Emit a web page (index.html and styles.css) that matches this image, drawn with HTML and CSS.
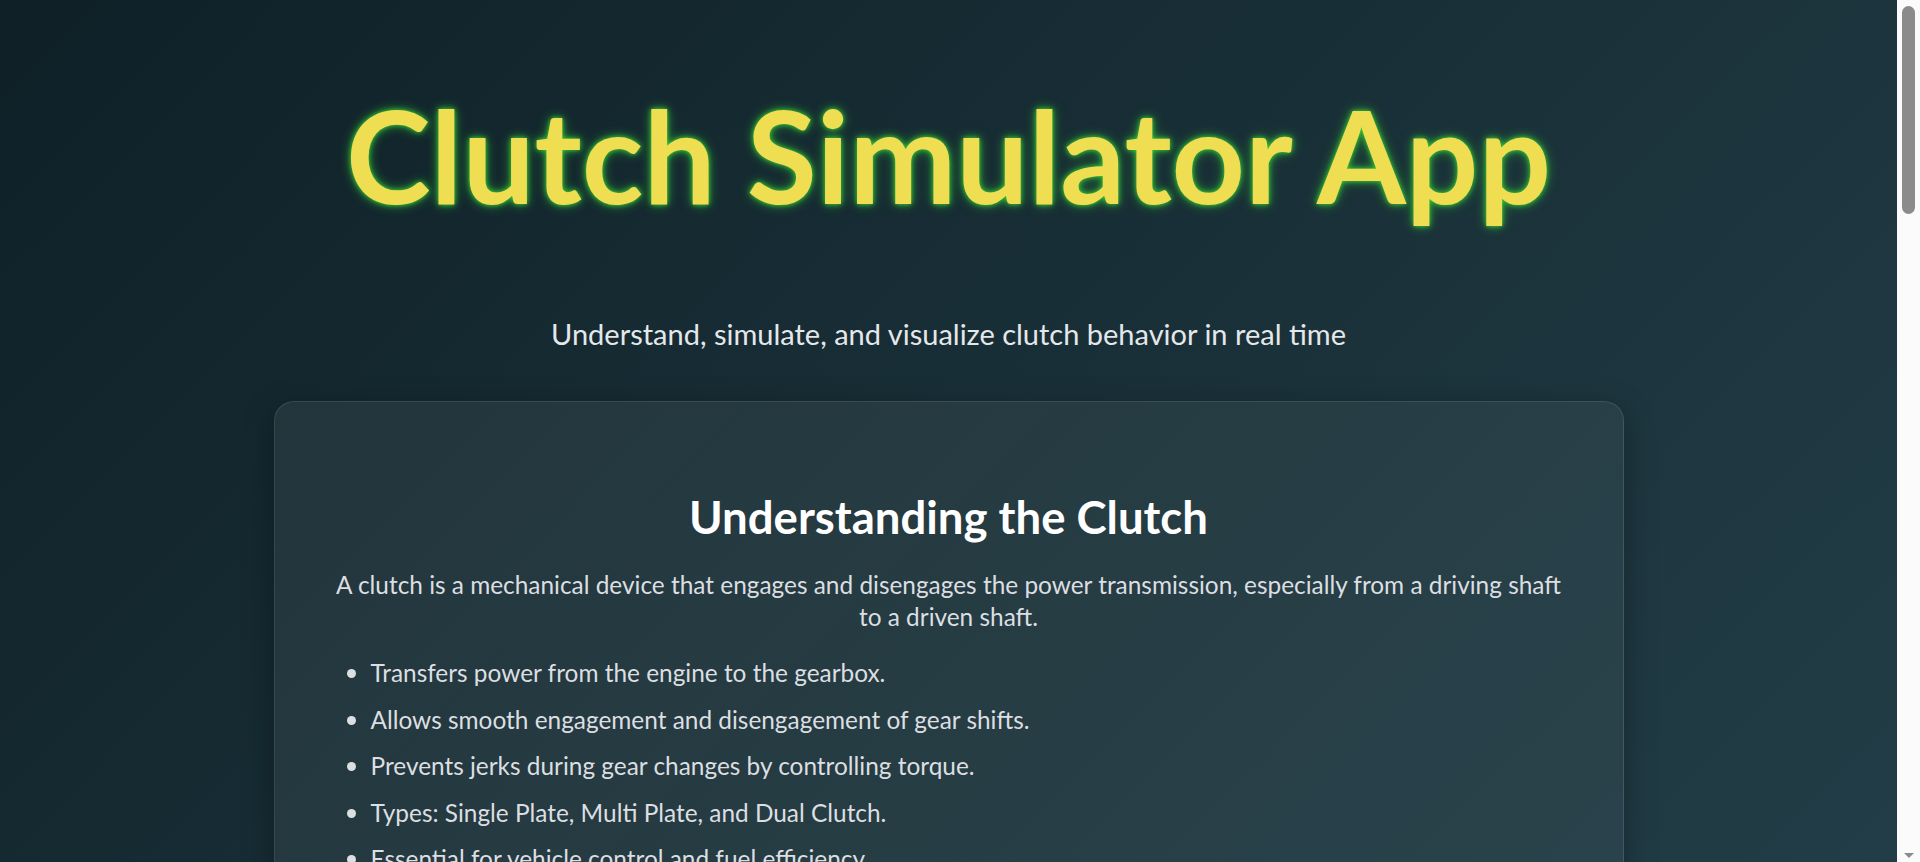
FILE: index.html
```html
<!DOCTYPE html>
<html lang="en">
<head>
<meta charset="utf-8">
<title>Clutch Simulator App</title>
<link rel="stylesheet" href="styles.css">
</head>
<body>
<div class="page">
<div class="page-inner">
<header class="hero">
  <h1 class="title">Clutch Simulator App</h1>
  <p class="subtitle">Understand, simulate, and visualize clutch behavior in real time</p>
</header>

<main class="main">
  <section class="card">
    <h2 class="card-title">Understanding the Clutch</h2>
    <p class="card-text">A clutch is a mechanical device that engages and disengages the power transmission, especially from a driving shaft to a driven shaft.</p>
    <ul class="card-list">
      <li>Transfers power from the engine to the gearbox.</li>
      <li>Allows smooth engagement and disengagement of gear shifts.</li>
      <li>Prevents jerks during gear changes by controlling torque.</li>
      <li>Types: Single Plate, Multi Plate, and Dual Clutch.</li>
      <li>Essential for vehicle control and fuel efficiency.</li>
    </ul>
  </section>

  <section class="card">
    <h2 class="card-title">Clutch Simulator</h2>
    <div class="controls">
      <label class="control">Clutch Pedal Position
        <input type="range" min="0" max="100" value="40">
      </label>
      <label class="control">Engine RPM
        <input type="range" min="800" max="7000" value="2500">
      </label>
      <label class="control">Gear
        <select><option>Neutral</option><option>1st</option><option>2nd</option></select>
      </label>
    </div>
    <div class="visual">
      <div class="disc disc-engine"></div>
      <div class="disc disc-gear"></div>
    </div>
    <div class="stats">
      <div class="stat"><span class="stat-label">Engagement</span><span class="stat-value">60%</span></div>
      <div class="stat"><span class="stat-label">Engine RPM</span><span class="stat-value">2500</span></div>
      <div class="stat"><span class="stat-label">Wheel RPM</span><span class="stat-value">1500</span></div>
      <div class="stat"><span class="stat-label">Torque</span><span class="stat-value">180 Nm</span></div>
    </div>
  </section>

  <section class="card">
    <h2 class="card-title">Types of Clutches</h2>
    <div class="types">
      <div class="type"><h3>Single Plate</h3><p>Common in cars; one friction disc between flywheel and pressure plate.</p></div>
      <div class="type"><h3>Multi Plate</h3><p>Several discs for higher torque in compact space; used in motorcycles.</p></div>
      <div class="type"><h3>Dual Clutch</h3><p>Two clutches for odd and even gears, enabling lightning-fast shifts.</p></div>
    </div>
  </section>

  <section class="card">
    <h2 class="card-title">Clutch Care Tips</h2>
    <ul class="card-list">
      <li>Avoid riding the clutch pedal while driving.</li>
      <li>Use the handbrake on slopes instead of slipping the clutch.</li>
      <li>Shift to neutral when stopped for long periods.</li>
      <li>Release the pedal smoothly to reduce wear.</li>
      <li>Have the clutch inspected at regular service intervals.</li>
    </ul>
  </section>
</main>

<footer class="footer">© 2024 Clutch Simulator App</footer>
</div>
</div>
<div class="scrollbar" aria-hidden="true">
  <div class="scrollbar-thumb"></div>
  <div class="scrollbar-arrow"></div>
</div>
</body>
</html>
```
FILE: styles.css
```css
html,
body {
  height: 100%;
  margin: 0;
  overflow: hidden;
  background: #0f2027;
}
body {
  display: flex;
  font-family: "Lato", "Noto Sans", sans-serif;
  color: #dcdfe1;
}

.page {
  flex: 1;
  min-width: 0;
  height: 100vh;
  overflow-y: auto;
  scrollbar-width: none;
}
.page-inner {
  background: linear-gradient(135deg, #0f2027 0%, #203a43 50%, #2c5364 100%);
}

/* window scrollbar rail, as in the captured browser */
.scrollbar {
  box-sizing: border-box;
  width: 23px;
  height: 100vh;
  padding: 6px 5px 4px;
  display: flex;
  flex-direction: column;
  justify-content: space-between;
  align-items: center;
  background: #fbfbfb;
}
.scrollbar-thumb {
  width: 13px;
  height: 208px;
  border-radius: 7px;
  background: #8b8b8b;
}
.scrollbar-arrow {
  width: 0;
  height: 0;
  border-left: 5px solid transparent;
  border-right: 5px solid transparent;
  border-top: 5px solid #8b8b8b;
}

.hero {
  text-align: center;
  padding: 70px 20px 0;
}
.title {
  margin: 0;
  font-size: 128px;
  line-height: 1.33;
  font-weight: 700;
  color: #f0de52;
  text-shadow: 0 0 5px #3ccf3c, 0 0 12px rgba(50, 205, 50, 0.7);
}
.subtitle {
  margin: 75px 0 0;
  font-size: 29px;
  line-height: 1.33;
  color: #e4e8ea;
}

.main {
  padding: 47px 0 40px;
}
.card {
  box-sizing: border-box;
  max-width: 1350px;
  margin: 0 auto 40px;
  padding: 40px 60px;
  border: 1px solid rgba(255, 255, 255, 0.1);
  border-radius: 20px;
  background: linear-gradient(135deg, rgba(255, 255, 255, 0.065), rgba(255, 255, 255, 0.045));
  box-shadow: 0 8px 32px rgba(0, 0, 0, 0.3);
}
.card-title {
  margin: 45px 0 22px;
  text-align: center;
  font-size: 45.5px;
  line-height: 1.33;
  font-weight: 700;
  color: #ffffff;
}
.card-text {
  margin: 0 0 23px;
  text-align: center;
  font-size: 24.4px;
  line-height: 32px;
}
.card-list {
  margin: 0;
  padding-left: 36px;
  font-size: 24.4px;
  line-height: 32px;
}
.card-list li {
  margin-bottom: 13.5px;
}
.card-list li::marker {
  font-size: 1.1em;
}

.controls {
  display: grid;
  grid-template-columns: repeat(3, 1fr);
  gap: 32px;
  font-size: 22px;
}
.control {
  display: flex;
  flex-direction: column;
  gap: 12px;
}
.control select {
  font: inherit;
  padding: 8px;
}
.visual {
  display: flex;
  justify-content: center;
  align-items: center;
  gap: 24px;
  height: 420px;
  margin: 40px 0;
  border-radius: 16px;
  background: rgba(0, 0, 0, 0.2);
}
.disc {
  width: 240px;
  height: 240px;
  border-radius: 50%;
  border: 12px solid #f0de52;
}
.disc-gear {
  border-color: #35c23a;
}
.stats {
  display: grid;
  grid-template-columns: repeat(4, 1fr);
  gap: 24px;
}
.stat {
  display: flex;
  flex-direction: column;
  align-items: center;
  gap: 8px;
  padding: 24px;
  border-radius: 12px;
  background: rgba(255, 255, 255, 0.06);
}
.stat-label {
  font-size: 18px;
}
.stat-value {
  font-size: 32px;
  font-weight: 700;
  color: #f0de52;
}
.types {
  display: grid;
  grid-template-columns: repeat(3, 1fr);
  gap: 24px;
  padding-bottom: 40px;
}
.type {
  padding: 24px;
  border-radius: 12px;
  background: rgba(255, 255, 255, 0.06);
  font-size: 20px;
  line-height: 1.4;
}
.type h3 {
  margin: 0 0 12px;
  color: #f0de52;
  font-size: 26px;
}
.footer {
  padding: 30px 0 40px;
  text-align: center;
  font-size: 18px;
  color: #9fb0b8;
}
```
